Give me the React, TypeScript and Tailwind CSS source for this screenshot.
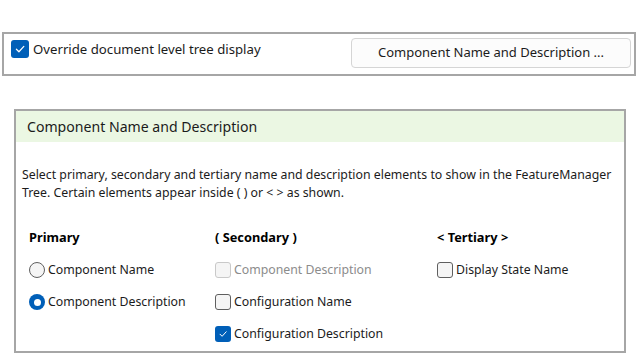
import React from "react";

const font = { fontFamily: '"Noto Sans", "Open Sans", sans-serif' };

function Check({ checked, disabled, size = 16 }: { checked?: boolean; disabled?: boolean; size?: number }) {
  if (checked) {
    return (
      <span
        className="flex items-center justify-center rounded-[3px] bg-[#005fb8] shrink-0"
        style={{ width: size, height: size }}
      >
        <svg width={size - 6} height={size - 6} viewBox="0 0 10 10" fill="none">
          <path d="M2 5.2 L4.1 7.3 L8.2 2.8" stroke="white" strokeWidth="1" strokeLinecap="round" strokeLinejoin="round" />
        </svg>
      </span>
    );
  }
  return (
    <span
      className={
        "block rounded-[3px] border shrink-0 " +
        (disabled ? "border-[#c9c9c9] bg-[#f5f5f5]" : "border-[#5f5f5f] bg-[#f5f5f5]")
      }
      style={{ width: size, height: size }}
    />
  );
}

function Radio({ checked }: { checked?: boolean }) {
  if (checked) {
    return (
      <span className="flex h-4 w-4 shrink-0 items-center justify-center rounded-full bg-[#005fb8]">
        <span className="block h-[7px] w-[7px] rounded-full bg-white" />
      </span>
    );
  }
  return <span className="block h-4 w-4 shrink-0 rounded-full border border-[#5f5f5f] bg-[#f5f5f5]" />;
}

function Row({ children, label, disabled }: { children: React.ReactNode; label: string; disabled?: boolean }) {
  return (
    <div className="flex h-8 items-center gap-[3px]">
      {children}
      <span className={"text-[12.3px] leading-none " + (disabled ? "text-[#8c8c8c]" : "text-[#1b1b1b]")}>{label}</span>
    </div>
  );
}

export default function App() {
  return (
    <div className="w-[640px] h-[360px] bg-white overflow-hidden" style={font}>
      <div className="mt-[32px] ml-[2px] w-[634px] h-[44px] border-2 border-[#a6a6a6] flex items-start justify-between pl-[7px] pr-[3px] pt-[4px]">
        <div className="flex items-center gap-[4px] mt-[2px]">
          <Check checked size={18} />
          <span className="text-[13.2px] leading-[18px] text-[#1b1b1b]">Override document level tree display</span>
        </div>
        <div className="w-[280px] h-[30px] rounded-[4px] border border-[#d5d5d5] bg-[#fcfcfc] flex items-center justify-center text-[13px] text-[#1b1b1b]">
          Component Name and Description ...
        </div>
      </div>

      <div className="mt-[33px] ml-[14px] w-[612px] h-[244px] border-2 border-[#a6a6a6]">
        <div className="h-[31px] bg-[#ebf7e3] flex items-center pl-[11px] text-[14.1px] text-[#1b1b1b]">
          Component Name and Description
        </div>
        <div className="pl-[6px] pt-[24px] text-[12.3px] leading-[18px] text-[#1b1b1b]">
          Select primary, secondary and tertiary name and description elements to show in the FeatureManager
          <br />
          Tree. Certain elements appear inside ( ) or &lt; &gt; as shown.
        </div>
        <div className="grid grid-cols-[186px_222px_1fr] pl-[13px] pt-[20px]">
          <div className="flex flex-col">
            <div className="h-8 flex items-center text-[12.8px] font-bold text-black">Primary</div>
            <Row label="Component Name"><Radio /></Row>
            <Row label="Component Description"><Radio checked /></Row>
          </div>
          <div className="flex flex-col">
            <div className="h-8 flex items-center text-[12.8px] font-bold text-black">( Secondary )</div>
            <Row label="Component Description" disabled><Check disabled /></Row>
            <Row label="Configuration Name"><Check /></Row>
            <Row label="Configuration Description"><Check checked /></Row>
          </div>
          <div className="flex flex-col">
            <div className="h-8 flex items-center text-[12.8px] font-bold text-black">&lt; Tertiary &gt;</div>
            <Row label="Display State Name"><Check /></Row>
          </div>
        </div>
      </div>
    </div>
  );
}
